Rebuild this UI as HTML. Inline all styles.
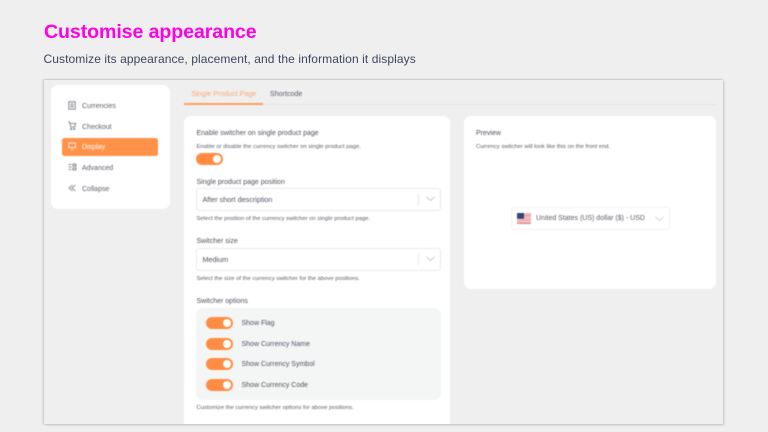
<!DOCTYPE html>
<html><head><meta charset="utf-8">
<style>
html,body{margin:0;padding:0;width:768px;height:432px;overflow:hidden;background:#efefef;font-family:"Liberation Sans",sans-serif}
.a{position:absolute;white-space:nowrap}
#title{left:44px;top:18px;font-size:19.6px;line-height:28px;font-weight:700;color:#ff00e6;letter-spacing:-.1px}
#sub{left:43.5px;top:50px;font-size:12px;line-height:18px;color:#3a4660;letter-spacing:.09px}
#panel{left:44px;top:80px;width:679px;height:344px;background:#efefef;box-shadow:-1px 0 2px #c4c4c4,1px 1px 2px #c4c4c4,0 -1px 1px #d4d4d4;overflow:hidden}
#in{position:absolute;left:-44px;top:-80px;width:768px;height:432px;filter:blur(.4px)}
.card{position:absolute;background:#fff;border-radius:7px}
.nav{font-size:7px;line-height:10px;color:#5c5f68;margin-top:1px}
.lab{font-size:7px;line-height:10px;color:#50535c;margin-top:1px}
.hint{font-size:5.85px;line-height:8px;color:#5a5d66;margin-top:1px}
.sel{position:absolute;left:196px;width:245px;height:23px;background:#fff;border:1px solid #e9eaec;border-radius:3px;box-sizing:border-box}
.sel span{position:absolute;left:5.5px;top:6px;font-size:7.2px;line-height:10px;color:#50535c}
.sel i{position:absolute;right:21px;top:5px;width:1px;height:11px;background:#e8e8ea}
.sel svg{position:absolute;right:5px;top:7px}
.tg{position:absolute;width:27px;height:12px;border-radius:6px;background:#ff8c42}
.tg:after{content:"";position:absolute;right:2px;top:2px;width:8px;height:8px;border-radius:50%;background:#fff}
</style></head><body>
<div class="a" id="title">Customise appearance</div>
<div class="a" id="sub">Customize its appearance, placement, and the information it displays</div>
<div class="a" id="panel"><div id="in">
 <div class="card" style="left:51px;top:85px;width:119px;height:124px"></div>
 <div class="a" style="left:62px;top:138px;width:96px;height:18px;background:#ff9248;border-radius:2.5px"></div>
 <svg class="a" style="left:68px;top:101px" width="9" height="60" viewBox="0 0 9 60" fill="none" stroke="#6a6d75" stroke-width=".8">
  <rect x=".8" y=".8" width="6.4" height="7.4"/><path d="M2.5 3h3M2.5 4.5h3M2.5 6h3"/>
  <path d="M.3 21h1.2l1.2 5h4l1-3.6H2" /><circle cx="3.2" cy="28" r=".6"/><circle cx="6.2" cy="28" r=".6"/>
  <g stroke="#fff"><rect x=".8" y="42" width="6.8" height="4.6"/><path d="M3 48.5h2.5"/></g>
 </svg>
 <svg class="a" style="left:68px;top:163px" width="9" height="30" viewBox="0 0 9 30" fill="none" stroke="#6a6d75" stroke-width=".8">
  <path d="M.5 1.5h3M.5 4h3M.5 6.5h3M5 1.2h3v2H5zM5 5h3v2H5z"/>
  <path d="M4.5 22l-3.5 3 3.5 3M7.5 22l-3.5 3 3.5 3"/>
 </svg>
 <div class="a nav" style="left:82px;top:101px">Currencies</div>
 <div class="a nav" style="left:82px;top:122px">Checkout</div>
 <div class="a nav" style="left:82px;top:142px;color:#fff">Display</div>
 <div class="a nav" style="left:82px;top:163px">Advanced</div>
 <div class="a nav" style="left:82px;top:184px">Collapse</div>

 <div class="a" style="left:184px;top:104px;width:532px;height:1px;background:#e6e6e6"></div>
 <div class="a" style="left:184px;top:103px;width:79px;height:1.6px;background:#ff9c5e"></div>
 <div class="a" style="left:191.5px;top:89px;font-size:7.1px;line-height:10px;color:#ffa878">Single Product Page</div>
 <div class="a" style="left:270px;top:89px;font-size:7.1px;line-height:10px;color:#5c5f68">Shortcode</div>

 <div class="card" style="left:184px;top:116px;width:266px;height:320px"></div>
 <div class="a lab" style="left:196.5px;top:128px">Enable switcher on single product page</div>
 <div class="a hint" style="left:196.5px;top:142px">Enable or disable the currency switcher on single product page.</div>
 <div class="tg" style="left:196px;top:153px"></div>
 <div class="a lab" style="left:196.5px;top:177px">Single product page position</div>
 <div class="sel" style="top:188px"><span>After short description</span><i></i><svg width="9" height="6" viewBox="0 0 9 6" fill="none" stroke="#b5b7bc" stroke-width=".8"><path d="M.5 1l4 3.5 4-3.5"/></svg></div>
 <div class="a hint" style="left:196.5px;top:214px">Select the position of the currency switcher on single product page.</div>
 <div class="a lab" style="left:196.5px;top:236px">Switcher size</div>
 <div class="sel" style="top:248px"><span>Medium</span><i></i><svg width="9" height="6" viewBox="0 0 9 6" fill="none" stroke="#b5b7bc" stroke-width=".8"><path d="M.5 1l4 3.5 4-3.5"/></svg></div>
 <div class="a hint" style="left:196.5px;top:274px">Select the size of the currency switcher for the above positions.</div>
 <div class="a lab" style="left:196.5px;top:296px">Switcher options</div>
 <div class="a" style="left:196px;top:308px;width:245px;height:92px;background:#f4f6f6;border-radius:7px"></div>
 <div class="tg" style="left:206px;top:317px"></div><div class="a lab" style="left:241.5px;top:318px">Show Flag</div>
 <div class="tg" style="left:206px;top:338px"></div><div class="a lab" style="left:241.5px;top:339px">Show Currency Name</div>
 <div class="tg" style="left:206px;top:358px"></div><div class="a lab" style="left:241.5px;top:359px">Show Currency Symbol</div>
 <div class="tg" style="left:206px;top:379px"></div><div class="a lab" style="left:241.5px;top:380px">Show Currency Code</div>
 <div class="a hint" style="left:196.5px;top:403px">Customize the currency switcher options for above positions.</div>

 <div class="card" style="left:464px;top:116px;width:252px;height:173px"></div>
 <div class="a lab" style="left:476px;top:128px">Preview</div>
 <div class="a hint" style="left:476px;top:142px">Currency switcher will look like this on the front end.</div>
 <div class="a" style="left:511px;top:207px;width:159px;height:23px;background:#fff;border:1px solid #f1f1f2;border-radius:3px;box-sizing:border-box"></div>
 <svg class="a" style="left:517px;top:213px" width="14" height="11" viewBox="0 0 14 11"><rect width="14" height="11" fill="#fff"/><path d="M0 .8h14M0 2.5h14M0 4.2h14M0 5.9h14M0 7.6h14M0 9.3h14M0 10.6h14" stroke="#e2777c" stroke-width=".9"/><rect width="7" height="5.6" fill="#2f4678"/></svg>
 <div class="a" style="left:536px;top:214px;font-size:7px;line-height:10px;color:#5c5f68">United States (US) dollar ($) - USD</div>
 <svg class="a" style="left:655px;top:216px" width="9" height="6" viewBox="0 0 9 6" fill="none" stroke="#c5c6ca" stroke-width=".8"><path d="M.5 1l4 3.5 4-3.5"/></svg>
</div></div>
</body></html>
